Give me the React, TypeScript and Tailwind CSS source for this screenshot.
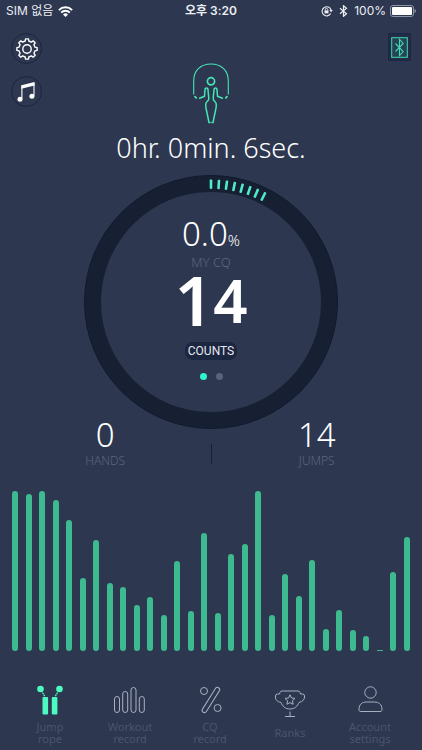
import React, { useState } from "react";

interface Tab {
  id: string;
  label: string;
  icon: React.ReactNode;
}

// Jump intensity history, each value is a bar height in px
const BARS = [
  160, 157, 160, 151, 131, 73, 111, 68, 64, 46, 54, 36, 90, 40, 118,
  38, 97, 107, 160, 36, 77, 55, 91, 22, 41, 21, 15, 1, 79, 114,
];

const TICKS = [0, 1, 2, 3, 4, 5, 6, 7];
const TICK_STEP = 3.77;

// Cog outline: 8 teeth, each one is valley -> tip -> tip -> valley
const gearPath = () => {
  const points: string[] = [];
  for (let i = 0; i < 8; i++) {
    [[-13, 8.2], [-8, 10.2], [8, 10.2], [13, 8.2]].forEach(([offset, r]) => {
      const a = ((i * 45 + offset) * Math.PI) / 180;
      points.push(`${(12 + r * Math.sin(a)).toFixed(2)} ${(12 - r * Math.cos(a)).toFixed(2)}`);
    });
  }
  return `M${points.join("L")}Z`;
};

const TABS: Tab[] = [
  {
    id: "jump",
    label: "Jump rope",
    icon: (
      <svg width="32" height="32" viewBox="0 0 32 32" fill="#4dfbc2">
        <circle cx="6.5" cy="4" r="3.3" />
        <circle cx="25.5" cy="4" r="3.3" />
        <path d="M8.5 7.5l2.2 3.7M23.5 7.5l-2.2 3.7" stroke="#4dfbc2" strokeWidth="1.3" strokeDasharray="1.8 0.7" />
        <rect x="8.5" y="12" width="5.6" height="17.5" rx="1" />
        <rect x="17.8" y="12" width="5.6" height="17.5" rx="1" />
      </svg>
    ),
  },
  {
    id: "workout",
    label: "Workout record",
    icon: (
      <svg width="32" height="32" viewBox="0 0 32 32" fill="none" stroke="#a9b0c0" strokeWidth="1">
        <rect x="0.5" y="11.5" width="5" height="16" rx="2.5" />
        <rect x="8.7" y="6.5" width="5" height="21" rx="2.5" />
        <rect x="17" y="2.5" width="5" height="25" rx="2.5" />
        <rect x="25.3" y="11.5" width="5" height="16" rx="2.5" />
      </svg>
    ),
  },
  {
    id: "cq",
    label: "CQ record",
    icon: (
      <svg width="32" height="32" viewBox="0 0 32 32" fill="none" stroke="#a9b0c0" strokeWidth="1">
        <circle cx="10" cy="6" r="3.5" />
        <circle cx="23.6" cy="23" r="3.5" />
        <rect x="14.6" y="0.5" width="4.6" height="29" rx="2.3" transform="rotate(32 16.9 15)" />
      </svg>
    ),
  },
  {
    id: "ranks",
    label: "Ranks",
    icon: (
      <svg width="32" height="32" viewBox="0 0 32 32" fill="none" stroke="#a9b0c0" strokeWidth="1" strokeLinejoin="round">
        <path d="M6 7.500Q6.500 6 8 6h16q1.500 0 2 1.500l.5 1.500h2q2 0 2 2v1q0 4-5.500 5.500C23.500 21 21 24 16 24S8.500 21 7 17.500C3 16.500 1.500 15 1.500 12v-1q0-2 2-2h2z" />
        <path d="M16 9.800l1.500 3.200 3.500.4-2.600 2.400.7 3.500-3.100-1.700-3.100 1.700.7-3.500-2.600-2.400 3.500-.4z" />
        <path d="M16 26.500v4.500M11 31.500h10" />
      </svg>
    ),
  },
  {
    id: "account",
    label: "Account settings",
    icon: (
      <svg width="32" height="32" viewBox="0 0 32 32" fill="none" stroke="#a9b0c0" strokeWidth="1">
        <circle cx="16.500" cy="7.500" r="5.700" />
        <path d="M5 24.500C5 19 8.500 17 12.500 17h8c4 0 7.500 2 7.500 7.500 0 1.500-.5 2-2 2H7c-1.500 0-2-.5-2-2z" />
      </svg>
    ),
  },
];

function StatusBar() {
  return (
    <div className="grid grid-cols-3 items-center h-[22px] px-[6px] text-[12px] leading-none text-[#eceef3] font-['Inter','Noto_Sans_CJK_KR',sans-serif]">
      <div className="flex items-center gap-[5px]">
        <span>SIM 없음</span>
        <svg width="15" height="11" viewBox="0 0 15 11" fill="none" stroke="#fff" strokeWidth="2">
          <path d="M0.900 4.100a9.300 9.300 0 0 1 13.200 0" />
          <path d="M3.200 6.600a6 6 0 0 1 8.600 0" />
          <path d="M7.500 11L5 8.400a3.600 3.600 0 0 1 5 0z" fill="#fff" stroke="none" />
        </svg>
      </div>
      <div className="text-center font-semibold">오후 3:20</div>
      <div className="flex items-center justify-end gap-1">
        <svg width="12" height="12" viewBox="0 0 12 12" fill="none" stroke="#eceef3" strokeWidth="1.100">
          <path d="M9.700 8.600A4.600 4.600 0 1 1 10.100 5" />
          <path d="M8.400 5h3.400l-1.700 2.200z" fill="#eceef3" stroke="none" />
          <rect x="3.500" y="5.400" width="4" height="3" fill="#eceef3" stroke="none" />
          <path d="M4.300 5.600V4.500a1.200 1.200 0 0 1 2.400 0v1.100" strokeWidth="0.900" />
        </svg>
        <svg className="mx-[2px]" width="9" height="12" viewBox="0 0 9 12" fill="none" stroke="#eceef3" strokeWidth="1.200">
          <path d="M1 3.200l6.500 5.600-3 2.500V0.700l3 2.500L1 8.800" />
        </svg>
        <span>100%</span>
        <svg width="26" height="12" viewBox="0 0 26 12">
          <rect x="0.500" y="0.500" width="23" height="11" rx="2.500" fill="none" stroke="#8d94a5" />
          <rect x="2" y="2" width="20" height="8" rx="1" fill="#fff" />
          <path d="M24.500 4q1.500 0.600 1.500 2t-1.500 2z" fill="#8d94a5" />
        </svg>
      </div>
    </div>
  );
}

function GearIcon() {
  return (
    <svg width="24" height="24" viewBox="0 0 24 24" fill="none" stroke="#fff" strokeWidth="1.400" strokeLinejoin="round">
      <circle cx="12" cy="12" r="4.200" />
      <path d={gearPath()} />
    </svg>
  );
}

function JumperIcon() {
  return (
    <svg width="38" height="62" viewBox="0 0 38 62" fill="none" stroke="#45e6b4" strokeWidth="1.500" strokeLinecap="round" strokeLinejoin="round">
      <path d="M1.700 31V18C1.700 7 9 1 19 1S36.300 7 36.300 18v13" strokeWidth="1.100" />
      <path d="M3 33.700l1.200 1.200M35 33.700l-1.200 1.200" strokeWidth="1.800" />
      <circle cx="19" cy="18.300" r="3.600" strokeWidth="1.700" />
      <path d="M7.500 35.300L12.500 33.300 13 27C13 24.200 16 24.200 16 27L16.800 35 16.500 37C13.500 40 13.300 41 14 45L17 59.500h1" />
      <path d="M30.500 35.300L25.500 33.300 25 27C25 24.200 22 24.200 22 27L21.200 35 21.500 37C24.500 40 24.700 41 24 45L21 59.500h-1" />
    </svg>
  );
}

function Ring({ children }: { children: React.ReactNode }) {
  return (
    <div className="relative mx-auto size-[254px] rounded-full border border-[#101a2e] bg-[#172033] p-4">
      <svg className="absolute inset-0 size-full" viewBox="0 0 254 254">
        {TICKS.map((i) => (
          <rect
            key={i}
            x="125.700"
            y="3.500"
            width="2.600"
            height="9.500"
            rx="0.800"
            fill="#4eeccb"
            transform={`rotate(${i * TICK_STEP} 127 127)`}
          />
        ))}
      </svg>
      <div className="flex size-full flex-col items-center rounded-full bg-[#2d3850]">{children}</div>
    </div>
  );
}

function Stat({ value, label }: { value: number; label: string }) {
  return (
    <div className="flex flex-col items-center">
      <span className="text-[33px] leading-9 font-light text-white">{value}</span>
      <span className="text-[12px] leading-4 font-light text-[#5c667e]">{label}</span>
    </div>
  );
}

export default function App() {
  const [activeTab, setActiveTab] = useState("jump");
  const [page, setPage] = useState(0);

  return (
    <div className="min-h-screen flex flex-col bg-[#2d3750] font-['Noto_Sans',sans-serif] text-white">
      <StatusBar />

      {/* Header */}
      <header className="grid grid-cols-3 px-[11px] pt-[11px]">
        <div className="flex flex-col gap-3">
          <button aria-label="Settings" className="flex size-[31px] items-center justify-center rounded-full border border-[#1b2540]">
            <GearIcon />
          </button>
          <button aria-label="Music" className="flex size-[31px] items-center justify-center rounded-full border border-[#1b2540]">
            <svg width="20" height="22" viewBox="0 0 20 22" fill="#fff">
              <path d="M4.900 17.500V4.500M17 2v12.700" fill="none" stroke="#fff" strokeWidth="1.100" />
              <path d="M4.400 4.300L17.500 1v3.400L4.400 7.700z" />
              <circle cx="3" cy="18.200" r="2.500" />
              <circle cx="14.900" cy="15.300" r="2.500" />
            </svg>
          </button>
        </div>
        <div className="flex justify-center pt-[30px]">
          <JumperIcon />
        </div>
        <div className="flex justify-end">
          <button aria-label="Bluetooth" className="flex h-[28px] w-[23px] items-center justify-center border border-[#1d2742] bg-[#222c46]">
            <svg width="17" height="21" viewBox="0 0 17 21" fill="none" stroke="#43d9b2" strokeWidth="1">
              <rect x="0.700" y="0.700" width="15.600" height="19.600" fill="#254353" />
              <path d="M4.500 6.500l7.700 8-3.700 4V2.500l3.700 4-7.700 8" strokeWidth="1.100" />
            </svg>
          </button>
        </div>
      </header>

      <h1 className="mt-[7px] text-center text-[27px] leading-8 font-light">0hr. 0min. 6sec.</h1>

      {/* Counter */}
      <main className="mt-[11px]">
        <Ring>
          <div className="mt-[22px] flex h-10 items-baseline font-light">
            <span className="text-[33px] leading-10">0.0</span>
            <span className="text-[15px] leading-none">%</span>
          </div>
          <span className="text-[13px] leading-4 font-light text-[#5c667e]">MY CQ</span>
          <div className="flex h-[60px] items-center font-semibold">
            <span className="text-[68px] leading-none">1</span>
            <span className="text-[60px] leading-none">4</span>
          </div>
          <span className="mt-3 rounded-lg bg-[#1b2640] px-[3px] text-[12px] leading-[18px] text-[#e6e9f0] font-['Roboto',sans-serif]">COUNTS</span>
          <div className="mt-[13px] flex gap-[9px]">
            {[0, 1].map((i) => (
              <button
                key={i}
                aria-label={`Page ${i + 1}`}
                onClick={() => setPage(i)}
                className={`size-[7px] rounded-full ${page === i ? "bg-[#2ff5cb]" : "bg-[#5a6379]"}`}
              />
            ))}
          </div>
        </Ring>

        <div className="-mt-3 grid grid-cols-[1fr_1px_1fr] items-end">
          <Stat value={0} label="HANDS" />
          <div className="mb-[5px] h-5 bg-[#172033]" />
          <Stat value={14} label="JUMPS" />
        </div>
      </main>

      {/* Bars */}
      <section className="mt-[21px] flex h-[161px] items-end justify-between px-3">
        {BARS.map((h, i) => (
          <div key={i} className="w-[6px] rounded-full bg-[#3dba90]" style={{ height: h }} />
        ))}
      </section>

      {/* Tabs */}
      <nav className="mt-auto grid grid-cols-5 pl-[10px] pr-3 pb-[5px]">
        {TABS.map((tab) => (
          <button
            key={tab.id}
            aria-current={activeTab === tab.id ? "page" : undefined}
            onClick={() => setActiveTab(tab.id)}
            className="flex flex-col items-center"
          >
            {tab.icon}
            <span className="mt-1 flex h-6 w-12 items-center justify-center text-center text-[11px] leading-3 text-[#4a556e]">
              {tab.label}
            </span>
          </button>
        ))}
      </nav>
    </div>
  );
}
